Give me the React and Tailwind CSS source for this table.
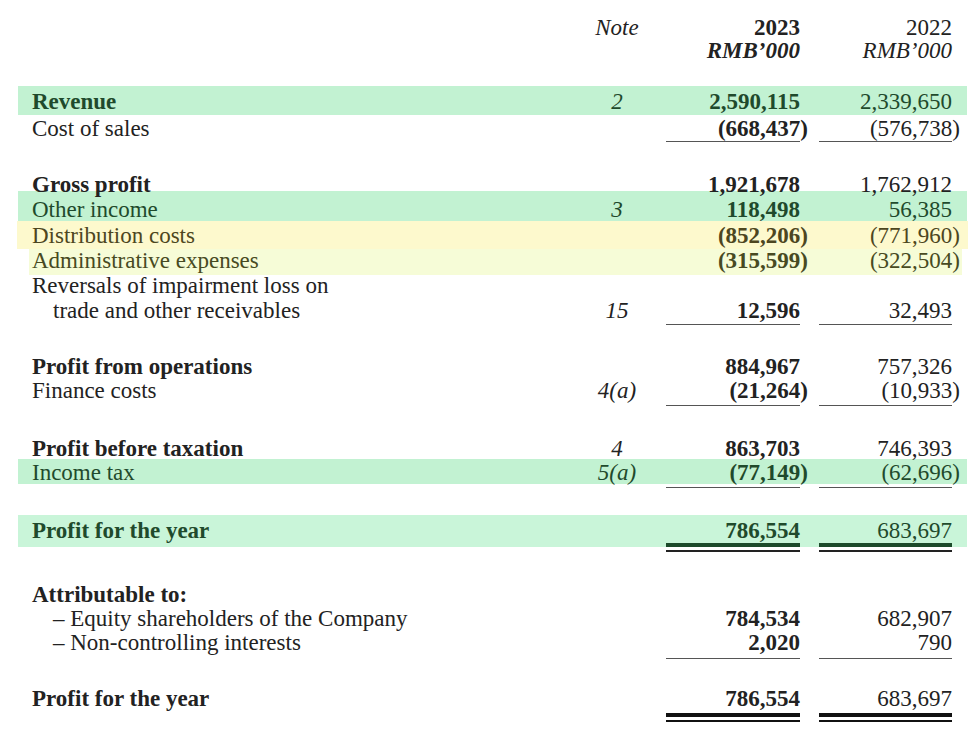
import React from "react";

const cols = "grid grid-cols-[1fr_90px_4px_134px_19px_133px]";

const bands = {
  none: "pl-[32px] pr-[17px] text-[#222]",
  green: "ml-[18px] mr-[2px] pl-[14px] pr-[15px] bg-[#c2f2d2] text-[#1f4a2c]",
  pale: "ml-[18px] mr-[2px] pl-[14px] pr-[15px] bg-[#c9f5d9] text-[#1f4a2c]",
  yellow: "ml-[17px] mr-[1px] pl-[15px] pr-[16px] bg-[#fdf9cd] text-[#4d4620]",
  lime: "ml-[29px] mr-[7px] pl-[3px] pr-[10px] bg-[#f6fcd7] text-[#474a22]",
};

function Num({ v, bold }) {
  if (!v) return <div />;
  const neg = v.startsWith("(");
  return (
    <div className={"flex justify-end " + (bold ? "font-bold" : "")}>
      <span className={neg ? "mr-[-8px]" : ""}>{v}</span>
    </div>
  );
}

function Row({ label, note, a, b, bold, indent, band = "none", size }) {
  return (
    <div className={cols + " leading-[18px] " + bands[band] + " " + size}>
      <div className={(bold ? "font-bold " : "") + (indent ? "pl-[21px]" : "")}>
        {label}
      </div>
      <div className="text-center italic">{note}</div>
      <div />
      <Num v={a} bold />
      <div />
      <Num v={b} />
    </div>
  );
}

function Rule({ size = "h-px", color = "bg-[#555]", band = "none" }) {
  return (
    <div className={cols + " " + bands[band]}>
      <div />
      <div />
      <div />
      <div className={size + " " + color} />
      <div />
      <div className={size + " " + color} />
    </div>
  );
}

export default function App() {
  return (
    <div className="w-[969px] h-[729px] bg-white font-['Liberation_Serif',serif] text-[23px] overflow-hidden">
      <div className={cols + " h-[86px] pt-[16px] pl-[32px] pr-[17px] leading-[23px] text-[#222]"}>
        <div />
        <div className="text-center italic">Note</div>
        <div />
        <div className="text-right font-bold">
          <div>2023</div>
          <div className="italic">RMB’000</div>
        </div>
        <div />
        <div className="text-right">
          <div>2022</div>
          <div className="italic">RMB’000</div>
        </div>
      </div>

      <Row band="green" size="h-[29px] pt-[7px]" label="Revenue" bold note="2" a="2,590,115" b="2,339,650" />
      <Row size="h-[26px] pt-[5px]" label="Cost of sales" a="(668,437)" b="(576,738)" />
      <Rule />

      <div className="h-[24px]" />
      <Row size="h-[25px] pt-[10px]" label="Gross profit" bold a="1,921,678" b="1,762,912" />
      <Row band="green" size="h-[30px] pt-[10px]" label="Other income" note="3" a="118,498" b="56,385" />
      <Row band="yellow" size="h-[28px] pt-[6px]" label="Distribution costs" a="(852,206)" b="(771,960)" />
      <Row band="lime" size="h-[26px] pt-[3px]" label="Administrative expenses" a="(315,599)" b="(322,504)" />
      <Row size="h-[25px] pt-[2px]" label="Reversals of impairment loss on" />
      <Row size="h-[24px] pt-[2px]" indent label="trade and other receivables" note="15" a="12,596" b="32,493" />
      <Rule />

      <div className="h-[27px]" />
      <Row size="h-[28px] pt-[6px]" label="Profit from operations" bold a="884,967" b="757,326" />
      <Row size="h-[25px] pt-[2px]" label="Finance costs" note="4(a)" a="(21,264)" b="(10,933)" />
      <Rule />

      <div className="h-[24px]" />
      <Row size="h-[29px] pt-[10px]" label="Profit before taxation" bold note="4" a="863,703" b="746,393" />
      <Row band="green" size="h-[25px] pt-[5px]" label="Income tax" note="5(a)" a="(77,149)" b="(62,696)" />
      <div className="h-[3px]" />
      <Rule />

      <div className="h-[27px]" />
      <Row band="pale" size="h-[28px] pt-[7px]" label="Profit for the year" bold a="786,554" b="683,697" />
      <Rule band="pale" size="h-[4px]" color="bg-[#1c4a2a]" />
      <div className="h-[3px]" />
      <Rule size="h-[2px]" color="bg-[#222]" />

      <div className="h-[28px]" />
      <Row size="h-[25px] pt-[6px]" label="Attributable to:" bold />
      <Row size="h-[24px] pt-[5px]" indent label="– Equity shareholders of the Company" a="784,534" b="682,907" />
      <Row size="h-[29px] pt-[5px]" indent label="– Non-controlling interests" a="2,020" b="790" />
      <Rule />

      <div className="h-[26px]" />
      <Row size="h-[28px] pt-[5px]" label="Profit for the year" bold a="786,554" b="683,697" />
      <Rule size="h-[4px]" color="bg-[#111]" />
      <div className="h-[3px]" />
      <Rule size="h-[2px]" color="bg-[#111]" />
    </div>
  );
}
